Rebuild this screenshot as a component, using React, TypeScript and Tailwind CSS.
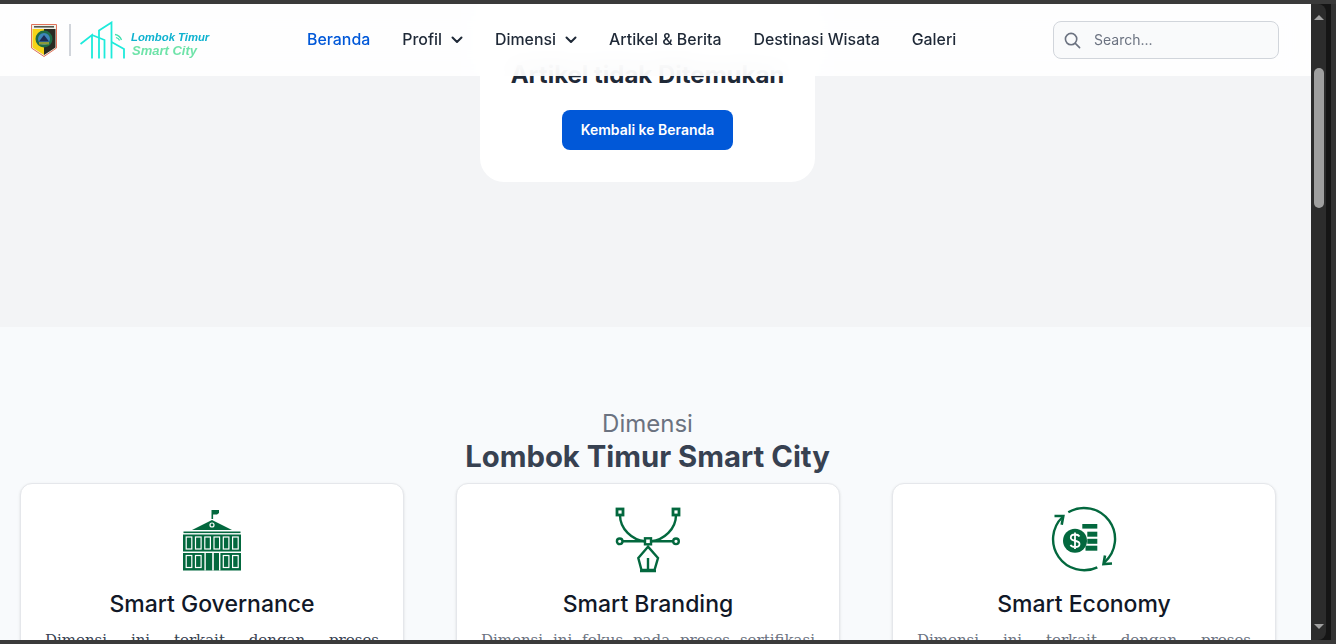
const heading = { fontFamily: '"Inter", "Liberation Sans", sans-serif' };

const EmblemLogo = () => (
  <svg width="26" height="33" viewBox="0 0 26 33" fill="none">
    <path d="M0.5 0.5H25.5V24L13 32.5L0.5 24Z" fill="#f0f0e8" stroke="#e0735a" />
    <path d="M1.5 5H13V31L1.5 23.5Z" fill="#f7d417" />
    <path d="M13 5H24.5V23.5L13 31Z" fill="#2a2a22" />
    <rect x="3" y="2" width="20" height="1.6" fill="#55584f" />
    <circle cx="13" cy="15" r="8.5" fill="#1f6b45" />
    <circle cx="13" cy="15" r="6" fill="#3d86b8" />
    <path d="M8 17.5L13 11L18 17.5Z" fill="#1d2c55" />
    <path d="M8 18H18V20.5H8Z" fill="#8a9a3a" />
  </svg>
);

const CityLogo = () => (
  <svg width="46" height="38" viewBox="0 0 46 38" fill="none" stroke="#1eeadb" strokeWidth="1.8">
    <path d="M0.5 23L12 14V37.5" />
    <path d="M12 14L24.5 19V37.5" />
    <path d="M19 37.5V9.5L31.5 1.5V37.5" />
    <path d="M31.5 21L44 28V37.5" />
    <path d="M35 13.5C38 14 40.5 16 41.5 19M36 16.5C37.6 17 39 18 39.6 19.5" stroke="#3fe0b0" strokeWidth="1.3" />
  </svg>
);

const Chevron = () => (
  <svg width="12" height="8" viewBox="0 0 12 8" fill="none" stroke="#1f2937" strokeWidth="2" strokeLinecap="round" strokeLinejoin="round">
    <path d="M1.5 1.5L6 6L10.5 1.5" />
  </svg>
);

const GovernanceIcon = () => (
  <svg width="60" height="64" viewBox="0 0 60 64" fill="#03683e">
    <rect x="29.5" y="3" width="1.6" height="9" />
    <path d="M30 3H37V6L35 7.5H30Z" />
    <path d="M10 23H50L30 13Z" />
    <circle cx="30" cy="18" r="2" fill="#03683e" stroke="#ffffff" strokeWidth="1.2" />
    <rect x="1.5" y="24.5" width="57" height="1.6" />
    <rect x="1" y="27.5" width="58" height="17" />
    <rect x="1" y="46" width="58" height="17.5" />
    <g fill="none" stroke="#ffffff" strokeWidth="1.2">
      {[4.2, 13.5, 22.8, 32, 41.3, 50.6].map((x) => (
        <rect key={x} x={x} y="30" width="5.6" height="12" />
      ))}
      {[4.2, 13.5, 41.3, 50.6].map((x) => (
        <rect key={x} x={x} y="48.5" width="5.6" height="12" />
      ))}
    </g>
    <g fill="#ffffff">
      <rect x="22.4" y="46" width="1.4" height="17.5" />
      <rect x="30.2" y="46" width="1.6" height="17.5" />
      <rect x="37" y="46" width="1.4" height="17.5" />
    </g>
  </svg>
);

const BrandingIcon = () => (
  <svg width="72" height="68" viewBox="0 0 72 68" fill="none" stroke="#03683e" strokeWidth="2.4">
    <path d="M8 10C8 24 20 35 33 36.3M64 10C64 24 52 35 39 36.3" />
    <path d="M10.7 36.3H33M39 36.3H61" />
    <rect x="5" y="4" width="6" height="6" strokeWidth="2.8" />
    <rect x="61" y="4" width="6" height="6" strokeWidth="2.8" />
    <rect x="33" y="33.3" width="6" height="6" />
    <circle cx="7.7" cy="36.3" r="2.8" />
    <circle cx="64" cy="36.3" r="2.8" />
    <path d="M36 41.7L26.3 53L29.5 65H42.5L46 53Z" />
    <path d="M36 53V65M28 66H44" />
  </svg>
);

const EconomyIcon = () => (
  <svg width="68" height="68" viewBox="1 -1 68 68" fill="none" stroke="#03683e" strokeWidth="2.4">
    <path d="M19.3 6.3A31 31 0 0 1 55.5 56.3" />
    <path d="M48.3 61.3A31 31 0 0 1 13.5 11" />
    <path d="M63 57.5L54.5 58L56 49.5" strokeWidth="2.6" />
    <path d="M5.5 10H14.3L12.7 18.7" strokeWidth="2.6" />
    <circle cx="26" cy="34.7" r="12" fill="#03683e" stroke="none" />
    <path d="M30.5 30.5C29.5 28.8 27.5 28.5 26 28.5C23.5 28.5 21.8 29.8 21.8 31.7C21.8 36 30.5 33.5 30.5 37.9C30.5 39.8 28.5 41 26 41C24 41 22.3 40.3 21.5 38.8M26 26.5V43" stroke="#ffffff" strokeWidth="1.8" />
    <g fill="#03683e" stroke="none">
      <rect x="33.3" y="18" width="15" height="4.6" />
      <rect x="38.3" y="25.7" width="10" height="5" />
      <rect x="38.3" y="32.8" width="10" height="5" />
      <rect x="36.5" y="39.7" width="11.8" height="5" />
    </g>
  </svg>
);

const cards = [
  {
    title: "Smart Governance",
    text: "Dimensi ini terkait dengan proses pemerintahan yang transparan",
    color: "text-[#374151]",
    icon: <GovernanceIcon />,
  },
  {
    title: "Smart Branding",
    text: "Dimensi ini fokus pada proses sertifikasi pemberdayaan daerah",
    color: "text-[#6b7280]",
    icon: <BrandingIcon />,
  },
  {
    title: "Smart Economy",
    text: "Dimensi ini terkait dengan proses pemberdayaan ekonomi daerah",
    color: "text-[#6b7280]",
    icon: <EconomyIcon />,
  },
];

export default function App() {
  return (
    <div className="flex h-screen w-full flex-col overflow-hidden bg-[#3a3a3a]" style={heading}>
      <div className="h-1 shrink-0 bg-[#3a3a3a]" />

      <div className="flex min-h-0 flex-1">
        {/* Page */}
        <div className="relative w-[1311px] shrink-0 overflow-hidden bg-[#f8fafc]">
          {/* Navbar */}
          <header className="absolute inset-x-0 top-0 z-10 flex h-[72px] items-center bg-white/90 backdrop-blur-md">
            <div className="ml-[31px] flex w-[180px] items-center">
              <EmblemLogo />
              <div className="ml-3 h-8 w-0.5 bg-[#d1d5db]" />
              <div className="ml-[9px]">
                <CityLogo />
              </div>
              <div className="ml-[5px] flex shrink-0 flex-col pt-2 text-[11.3px] leading-[13px] font-bold italic" style={{ fontFamily: '"Liberation Sans", sans-serif' }}>
                <span className="text-[#0fb2cf]">Lombok Timur</span>
                <span className="pl-px text-[13px] text-[#6fe3a9]">Smart City</span>
              </div>
            </div>

            <nav className="ml-[96px] flex items-center gap-8 text-[15.9px] font-medium text-[#1f2937]">
              <span className="text-[#0158d8]">Beranda</span>
              <span className="flex items-center gap-[9px]">
                Profil <Chevron />
              </span>
              <span className="flex items-center gap-[9px]">
                Dimensi <Chevron />
              </span>
              <span>Artikel &amp; Berita</span>
              <span>Destinasi Wisata</span>
              <span>Galeri</span>
            </nav>

            <div className="absolute right-8 flex h-[38px] w-[226px] items-center gap-[13px] rounded-lg border border-[#d1d5db] bg-[#f9fafb] pl-[10px]">
              <svg width="17" height="17" viewBox="0 0 18 18" fill="none" stroke="#6b7280" strokeWidth="1.7" strokeLinecap="round">
                <circle cx="7.5" cy="7.5" r="6" />
                <path d="M12 12L16.5 16.5" />
              </svg>
              <input placeholder="Search..." className="w-40 bg-transparent text-sm outline-none placeholder:text-[#6b7280]" />
            </div>
          </header>

          {/* Not found */}
          <section className="flex h-[323px] justify-center bg-[#f3f4f6] pr-4">
            <div className="flex h-[178px] w-[335px] flex-col items-center rounded-b-3xl bg-white pt-[55px]">
              <h2 className="text-[24px] leading-8 font-bold whitespace-nowrap text-[#1f2937]">Artikel tidak Ditemukan</h2>
              <button className="mt-[19px] h-10 w-[171px] rounded-lg bg-[#0158d8] text-sm font-semibold text-white">Kembali ke Beranda</button>
            </div>
          </section>

          {/* Dimensi */}
          <section className="pt-[81px]">
            <div className="pr-4">
              <p className="text-center text-2xl leading-8 text-[#6b7280]">Dimensi</p>
              <h2 className="text-center text-[29.3px] leading-[34px] font-bold text-[#374151]">Lombok Timur Smart City</h2>
            </div>
            <div className="mt-[9px] ml-5 grid w-[1256px] grid-cols-3 gap-[52px]">
              {cards.map((card) => (
                <div key={card.title} className="h-[200px] rounded-xl border border-[#e5e7eb] bg-white px-6 pt-5 shadow-sm">
                  <div className="flex h-[70px] items-center justify-center">{card.icon}</div>
                  <h3 className="mt-[14px] text-center text-[23px] leading-8 font-medium text-[#111827]">{card.title}</h3>
                  <p className={`mt-2 text-justify text-[15px] leading-6 ${card.color}`} style={{ fontFamily: '"DejaVu Serif", serif' }}>
                    {card.text}
                  </p>
                </div>
              ))}
            </div>
          </section>
        </div>

        {/* Scrollbar */}
        <div className="flex w-[25px] shrink-0 bg-[#151515]">
          <div className="flex w-[15px] flex-col items-center rounded-tr-lg rounded-br-lg bg-[#2c2c2c]">
            <div className="mt-[11px] h-0 w-0 border-x-[5px] border-b-[5px] border-x-transparent border-b-[#a0a0a0]" />
            <div className="mt-[48px] h-[140px] w-[10px] rounded-full bg-[#9f9f9f]" />
            <div className="mt-auto mb-[11px] h-0 w-0 border-x-[5px] border-t-[5px] border-x-transparent border-t-[#a0a0a0]" />
          </div>
          <div className="ml-auto w-[5px] bg-[#333333]" />
        </div>
      </div>

      <div className="h-1 shrink-0 bg-[#3a3a3a]" />
    </div>
  );
}
